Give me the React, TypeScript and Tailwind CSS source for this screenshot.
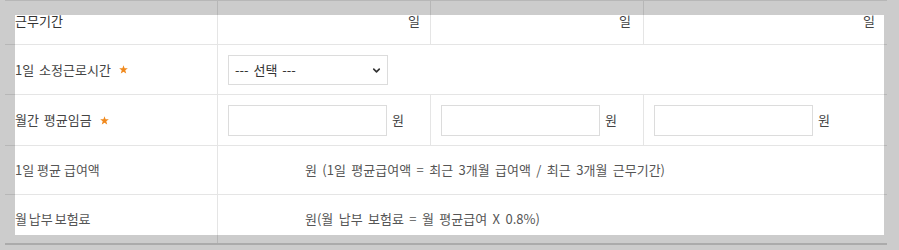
import { ChevronDown } from "lucide-react";

const line = "border-[rgba(0,0,0,0.1)]";

function Star() {
  return (
    <svg viewBox="0 0 10 10" className="ml-[8px] h-[9px] w-[9px] fill-[#f0891d]">
      <path d="M5 0.3 6.2 3.6 9.8 3.7 7 5.9 8 9.5 5 7.4 2 9.5 3 5.9 0.2 3.7 3.8 3.6Z" />
    </svg>
  );
}

function MoneyInput() {
  return (
    <div className="flex items-center gap-[5px]">
      <input
        type="text"
        className="h-[31px] w-[159px] border border-[#dcdcdc] bg-white px-2 text-[13px] outline-none"
      />
      <span>원</span>
    </div>
  );
}

export default function App() {
  return (
    <main
      className="relative h-[250px] w-[899px] overflow-hidden bg-[#cccccc] text-[13px] text-[#444]"
      style={{ fontFamily: '"Noto Sans CJK KR", "Noto Sans", sans-serif' }}
    >
      {/* highlighted area behind the table */}
      <div className="absolute left-[15px] top-[15px] h-[220px] w-[869px] bg-white" />

      <div className={`relative ml-[5px] w-[882px] border-t ${line}`}>
        {/* 근무기간 */}
        <div className={`grid h-[44px] grid-cols-[212px_213px_213px_1fr] border-b ${line}`}>
          <div className="flex items-center pb-[3px] pl-[10px] text-[#333]">근무기간</div>
          <div className={`flex items-center justify-end border-l ${line} pb-[3px] pr-[10px]`}>일</div>
          <div className={`flex items-center justify-end border-l ${line} pb-[3px] pr-[12px]`}>일</div>
          <div className={`flex items-center justify-end border-l ${line} pb-[3px] pr-[12px]`}>일</div>
        </div>

        {/* 1일 소정근로시간 */}
        <div className={`grid h-[50px] grid-cols-[212px_1fr] border-b ${line}`}>
          <div className="flex items-center pl-[10px] [word-spacing:2px]">
            1일 소정근로시간
            <Star />
          </div>
          <div className={`flex items-center border-l ${line} pl-[10px]`}>
            <div className="relative">
              <select className="h-[30px] w-[160px] appearance-none border border-[#dcdcdc] bg-white pl-[6px] text-[13px] text-[#333] outline-none [word-spacing:2px]">
                <option>--- 선택 ---</option>
              </select>
              <ChevronDown
                className="pointer-events-none absolute right-[6px] top-[10px] h-[11px] w-[11px] text-[#333]"
                strokeWidth={3.5}
              />
            </div>
          </div>
        </div>

        {/* 월간 평균임금 */}
        <div className={`grid h-[51px] grid-cols-[212px_213px_213px_1fr] border-b ${line}`}>
          <div className="flex items-center pl-[10px] [word-spacing:2px]">
            월간 평균임금
            <Star />
          </div>
          <div className={`flex items-center border-l ${line} pl-[10px]`}>
            <MoneyInput />
          </div>
          <div className={`flex items-center border-l ${line} pl-[10px]`}>
            <MoneyInput />
          </div>
          <div className={`flex items-center border-l ${line} pl-[10px]`}>
            <MoneyInput />
          </div>
        </div>

        {/* 1일 평균 급여액 */}
        <div className={`grid h-[49px] grid-cols-[212px_1fr] border-b ${line}`}>
          <div className="flex items-center pl-[10px] text-[#555]">1일 평균 급여액</div>
          <div className={`flex items-center border-l ${line} pl-[10px] text-[#555] [word-spacing:2.5px]`}>
            <span className="inline-block w-[77px]" />
            원 (1일 평균급여액 = 최근 3개월 급여액 / 최근 3개월 근무기간)
          </div>
        </div>

        {/* 월 납부 보험료 */}
        <div className="grid h-[50px] grid-cols-[212px_1fr] border-b-2 border-[rgba(0,0,0,0.16)]">
          <div className="flex items-center pl-[10px] text-[#555] [word-spacing:-1px]">월 납부 보험료</div>
          <div className={`flex items-center border-l ${line} pl-[10px] text-[#555] [word-spacing:2.5px]`}>
            <span className="inline-block w-[77px]" />
            원(월 납부 보험료 = 월 평균급여 X 0.8%)
          </div>
        </div>
      </div>
    </main>
  );
}
